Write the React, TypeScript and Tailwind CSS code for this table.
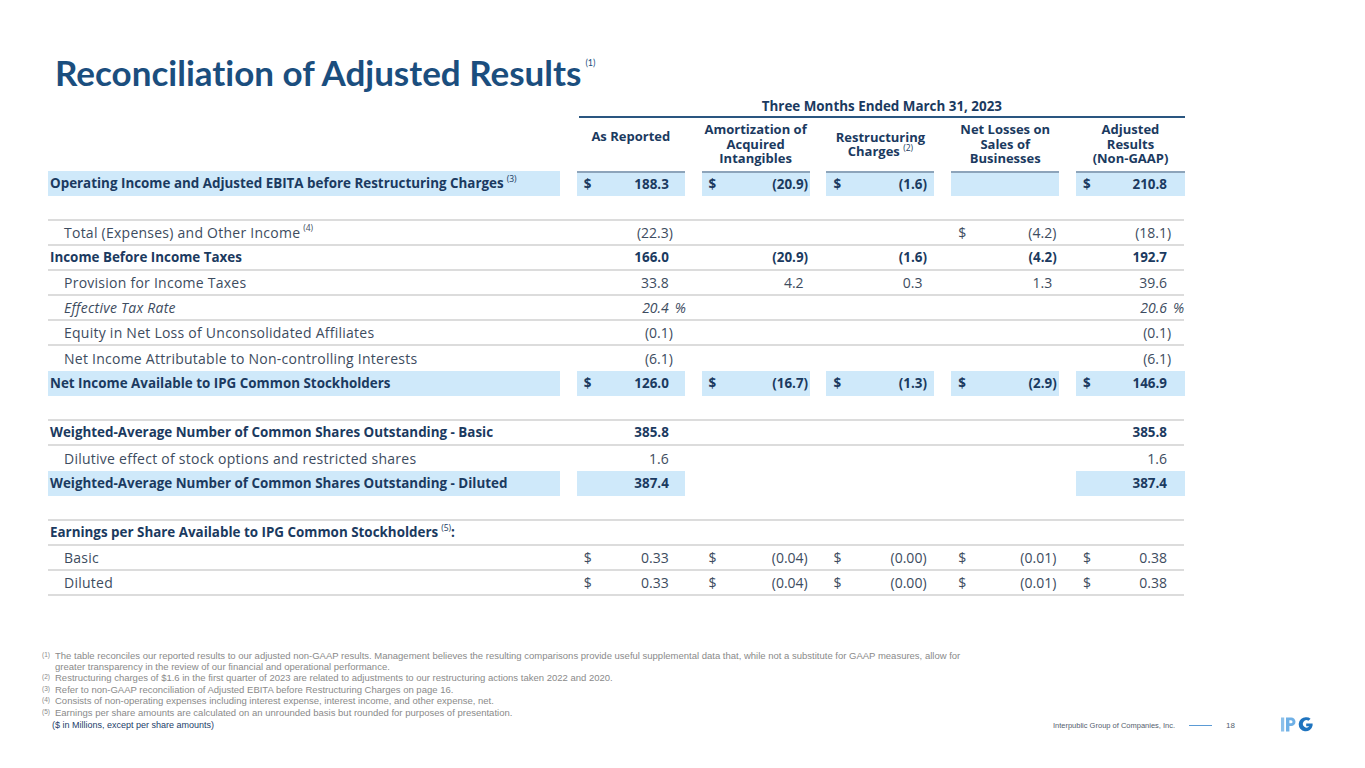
import React from "react";

type Cell = { d?: boolean; v: string; s?: string } | null;
type Row = {
  label?: string;
  sup?: string;
  after?: string;
  bold?: boolean;
  italic?: boolean;
  indent?: boolean;
  hl?: number[]; // 0 = label, 1..5 = value columns
  line?: boolean;
  vals?: Cell[];
};

const slotW = ["w-[16px]", "w-[6px]", "w-[12px]", "w-[7px]", "w-[18px]"];

const rows: Row[] = [
  {
    label: "Operating Income and Adjusted EBITA before Restructuring Charges",
    sup: "(3)",
    bold: true,
    hl: [0, 1, 2, 3, 4, 5],
    vals: [
      { d: true, v: "188.3" },
      { d: true, v: "(20.9", s: ")" },
      { d: true, v: "(1.6", s: ")" },
      null,
      { d: true, v: "210.8" },
    ],
  },
  { line: true },
  {
    label: "Total (Expenses) and Other Income",
    sup: "(4)",
    indent: true,
    line: true,
    vals: [{ v: "(22.3", s: ")" }, null, null, { d: true, v: "(4.2", s: ")" }, { v: "(18.1", s: ")" }],
  },
  {
    label: "Income Before Income Taxes",
    bold: true,
    line: true,
    vals: [{ v: "166.0" }, { v: "(20.9", s: ")" }, { v: "(1.6", s: ")" }, { v: "(4.2", s: ")" }, { v: "192.7" }],
  },
  {
    label: "Provision for Income Taxes",
    indent: true,
    line: true,
    vals: [{ v: "33.8" }, { v: "4.2" }, { v: "0.3" }, { v: "1.3" }, { v: "39.6" }],
  },
  {
    label: "Effective Tax Rate",
    indent: true,
    italic: true,
    line: true,
    vals: [{ v: "20.4", s: "%" }, null, null, null, { v: "20.6", s: "%" }],
  },
  {
    label: "Equity in Net Loss of Unconsolidated Affiliates",
    indent: true,
    line: true,
    vals: [{ v: "(0.1", s: ")" }, null, null, null, { v: "(0.1", s: ")" }],
  },
  {
    label: "Net Income Attributable to Non-controlling Interests",
    indent: true,
    vals: [{ v: "(6.1", s: ")" }, null, null, null, { v: "(6.1", s: ")" }],
  },
  {
    label: "Net Income Available to IPG Common Stockholders",
    bold: true,
    hl: [0, 1, 2, 3, 4, 5],
    vals: [
      { d: true, v: "126.0" },
      { d: true, v: "(16.7", s: ")" },
      { d: true, v: "(1.3", s: ")" },
      { d: true, v: "(2.9", s: ")" },
      { d: true, v: "146.9" },
    ],
  },
  { line: true },
  {
    label: "Weighted-Average Number of Common Shares Outstanding - Basic",
    bold: true,
    line: true,
    vals: [{ v: "385.8" }, null, null, null, { v: "385.8" }],
  },
  {
    label: "Dilutive effect of stock options and restricted shares",
    indent: true,
    vals: [{ v: "1.6" }, null, null, null, { v: "1.6" }],
  },
  {
    label: "Weighted-Average Number of Common Shares Outstanding - Diluted",
    bold: true,
    hl: [0, 1, 5],
    vals: [{ v: "387.4" }, null, null, null, { v: "387.4" }],
  },
  { line: true },
  {
    label: "Earnings per Share Available to IPG Common Stockholders",
    sup: "(5)",
    after: ":",
    bold: true,
    line: true,
  },
  {
    label: "Basic",
    indent: true,
    line: true,
    vals: [
      { d: true, v: "0.33" },
      { d: true, v: "(0.04", s: ")" },
      { d: true, v: "(0.00", s: ")" },
      { d: true, v: "(0.01", s: ")" },
      { d: true, v: "0.38" },
    ],
  },
  {
    label: "Diluted",
    indent: true,
    line: true,
    vals: [
      { d: true, v: "0.33" },
      { d: true, v: "(0.04", s: ")" },
      { d: true, v: "(0.00", s: ")" },
      { d: true, v: "(0.01", s: ")" },
      { d: true, v: "0.38" },
    ],
  },
];

const grid = "grid grid-cols-[512px_108px_108px_108px_108px_109px] gap-x-[16.8px]";

function TableRow({ r, first }: { r: Row; first?: boolean }) {
  const text = r.bold
    ? "font-bold text-[13.4px] text-[#1b3a60]"
    : "text-[14px] tracking-[0.25px] text-[#3d4c60]";
  const ital = r.italic ? "italic" : "";
  return (
    <div className={`${grid} h-[25px] ${r.line ? "border-b-2 border-[#dcdcdc]" : ""}`}>
      <div
        className={`flex items-center h-full whitespace-nowrap ${r.indent ? "pl-4" : "pl-[2px]"} ${
          r.hl?.includes(0) ? "bg-[#cfe9fa]" : ""
        } ${text} ${ital}`}
      >
        {r.label}
        {r.sup && <sup className="text-[8.5px] ml-[3px] -top-[5px] font-normal tracking-normal">{r.sup}</sup>}
        {r.after}
      </div>
      {[0, 1, 2, 3, 4].map((i) => {
        const c = r.vals ? r.vals[i] : null;
        const hl = r.hl?.includes(i + 1);
        return (
          <div
            key={i}
            className={`flex items-center h-full pl-[7px] ${hl ? "bg-[#cfe9fa]" : ""} ${
              first ? "border-t-2 border-[#8da4ba]" : ""
            } ${text} ${ital} tracking-normal`}
          >
            <span className="w-3">{c?.d ? "$" : ""}</span>
            <span className="flex-1 text-right">{c?.v}</span>
            <span className={`${slotW[i]} whitespace-nowrap ${c?.s === "%" ? "pl-[6px]" : ""}`}>{c?.s}</span>
          </div>
        );
      })}
    </div>
  );
}

function Logo() {
  return (
    <svg width="32" height="15" viewBox="0 0 32 15">
      <rect x="0" y="0.5" width="3.2" height="14" fill="#8cc0ea" />
      <path d="M5 0.5h5.2a4.3 4.3 0 0 1 0 8.6H8.4v5.4H5z" fill="#6fb0e6" />
      <path d="M8.4 3.3h1.6a1.5 1.5 0 0 1 0 3H8.4z" fill="#ffffff" />
      <path
        d="M25 0.3a7 7 0 1 0 6.6 8.2V6.6h-6.4v2.6h3.1a3.6 3.6 0 1 1-0.9-5.4l2.2-2.1A7 7 0 0 0 25 0.3z"
        fill="#1f74bf"
      />
    </svg>
  );
}

const footnotes: [string, string][] = [
  [
    "(1)",
    "The table reconciles our reported results to our adjusted non-GAAP results. Management believes the resulting comparisons provide useful supplemental data that, while not a substitute for GAAP measures, allow for greater transparency in the review of our financial and operational performance.",
  ],
  [
    "(2)",
    "Restructuring charges of $1.6 in the first quarter of 2023 are related to adjustments to our restructuring actions taken 2022 and 2020.",
  ],
  ["(3)", "Refer to non-GAAP reconciliation of Adjusted EBITA before Restructuring Charges on page 16."],
  ["(4)", "Consists of non-operating expenses including interest expense, interest income, and other expense, net."],
  ["(5)", "Earnings per share amounts are calculated on an unrounded basis but rounded for purposes of presentation."],
];

export default function App() {
  return (
    <div className="w-[1365px] h-[768px] bg-white overflow-hidden flex flex-col font-['Open_Sans',sans-serif]">
      <h1 className="pl-[55px] pt-[50px] text-[35px] leading-[44px] font-bold text-[#1b4e7e] font-['Lato',sans-serif] [font-variant-ligatures:none]">
        Reconciliation of Adjusted Results
        <sup className="text-[9px] font-normal -top-[20px] ml-[4px] text-[#1b4e7e]">(1)</sup>
      </h1>

      <div className="ml-[48px] w-[1136px] mt-[3px] text-[13px]">
        <div className={grid}>
          <div />
          <div className="col-span-5 text-center font-bold text-[13.4px] text-[#1b3a60] border-b-2 border-[#2a5680] pb-[1px] leading-[18px] ml-[2px]">
            Three Months Ended March 31, 2023
          </div>
        </div>
        <div className={`${grid} h-[52px] items-center font-bold text-[#1b3a60] leading-[14.5px] text-center`}>
          <div />
          <div className="pb-4">As Reported</div>
          <div>
            Amortization of
            <br />
            Acquired
            <br />
            Intangibles
          </div>
          <div>
            Restructuring
            <br />
            Charges <sup className="text-[8.5px] font-normal -top-[5px]">(2)</sup>
          </div>
          <div>
            Net Losses on
            <br />
            Sales of
            <br />
            Businesses
          </div>
          <div>
            Adjusted
            <br />
            Results
            <br />
            (Non-GAAP)
          </div>
        </div>
        <div className="mt-[1px]">
          {rows.map((r, i) => (
            <TableRow key={i} r={r} first={i === 0} />
          ))}
        </div>
      </div>

      <div className="mt-auto pb-[36px] pl-[42px] pr-[52px] font-['Liberation_Sans',Arial,sans-serif] text-[9.5px] leading-[11.4px]">
        {footnotes.map(([n, t]) => (
          <div key={n} className="grid grid-cols-[13px_912px] text-[#8a8a8a]">
            <span className="text-[6.5px] leading-[9px]">{n}</span>
            <span>{t}</span>
          </div>
        ))}
        <div className="flex items-center justify-between mt-[1px]">
          <span className="pl-[10px] text-[9px] text-[#24406a]">($ in Millions, except per share amounts)</span>
          <div className="flex items-center text-[7.5px] text-[#55606e]">
            <span>Interpublic Group of Companies, Inc.</span>
            <span className="w-[23px] h-[1.5px] bg-[#5b9bd5] mx-[14px]" />
            <span className="text-[8px]">18</span>
            <span className="ml-[46px] -mt-[2px]">
              <Logo />
            </span>
          </div>
        </div>
      </div>
    </div>
  );
}
